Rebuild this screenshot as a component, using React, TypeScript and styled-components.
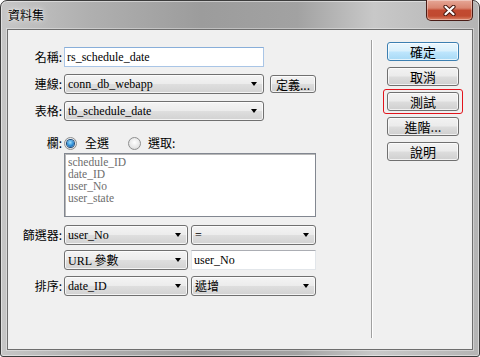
import React from "react";
import styled, { createGlobalStyle } from "styled-components";

const CJK = `"Noto Sans CJK TC", "Liberation Sans", sans-serif`;
const SERIF = `"Liberation Serif", "Noto Sans CJK TC", serif`;

const GlobalStyle = createGlobalStyle`
  html, body {
    margin: 0;
    padding: 0;
    background: #ffffff;
  }
  body {
    width: 480px;
    height: 357px;
    overflow: hidden;
    font-family: ${CJK};
  }
`;

function App() {
  return (
    <>
      <GlobalStyle />
      <Window>
        <TitleBar>
          <Title>資料集</Title>
          <CloseButton>
            <svg width="13" height="11" viewBox="0 0 13 11">
              <path
                d="M2.5 1.8 L10.5 9.2 M10.5 1.8 L2.5 9.2"
                stroke="#4b1b12"
                strokeWidth="4.2"
                strokeLinecap="round"
              />
              <path
                d="M2.5 1.8 L10.5 9.2 M10.5 1.8 L2.5 9.2"
                stroke="#ffffff"
                strokeWidth="2.2"
                strokeLinecap="round"
              />
            </svg>
          </CloseButton>
        </TitleBar>

        <Client>
          <Form>
            <Row $h={20}>
              <Label>名稱:</Label>
              <TextBox $w={200} $focused readOnly value="rs_schedule_date" />
            </Row>

            <Row $h={20} $mt={7}>
              <Label>連線:</Label>
              <Select $w={200}>
                <span>conn_db_webapp</span>
                <Arrow />
              </Select>
              <SmallButton>定義...</SmallButton>
            </Row>

            <Row $h={20} $mt={7}>
              <Label>表格:</Label>
              <Select $w={200}>
                <span>tb_schedule_date</span>
                <Arrow />
              </Select>
            </Row>

            <Row $h={14} $mt={15}>
              <Label>欄:</Label>
              <Radio $checked />
              <RadioText>全選</RadioText>
              <Radio $gap={19} />
              <RadioText $gap={7}>選取:</RadioText>
            </Row>

            <Row $h={64} $mt={3}>
              <Label />
              <ListBox>
                <ListItem>schedule_ID</ListItem>
                <ListItem>date_ID</ListItem>
                <ListItem>user_No</ListItem>
                <ListItem>user_state</ListItem>
              </ListBox>
            </Row>

            <Row $h={20} $mt={8}>
              <Label>篩選器:</Label>
              <Select $w={124}>
                <span>user_No</span>
                <Arrow />
              </Select>
              <Select $w={125} $ml={3}>
                <span>=</span>
                <Arrow />
              </Select>
            </Row>

            <Row $h={20} $mt={5}>
              <Label />
              <Select $w={124}>
                <span>URL 參數</span>
                <Arrow />
              </Select>
              <TextBox $w={125} $ml={3} readOnly value="user_No" />
            </Row>

            <Row $h={20} $mt={6}>
              <Label>排序:</Label>
              <Select $w={124}>
                <span>date_ID</span>
                <Arrow />
              </Select>
              <Select $w={125} $ml={3}>
                <span>遞增</span>
                <Arrow />
              </Select>
            </Row>
          </Form>

          <Separator />

          <ButtonColumn>
            <DialogButton $primary>確定</DialogButton>
            <DialogButton>取消</DialogButton>
            <Marked>
              <DialogButton>測試</DialogButton>
            </Marked>
            <DialogButton>進階...</DialogButton>
            <DialogButton>說明</DialogButton>
          </ButtonColumn>
        </Client>
      </Window>
    </>
  );
}

export default App;

const Window = styled.div`
  width: 480px;
  height: 357px;
  box-sizing: border-box;
  display: flex;
  flex-direction: column;
  padding: 0 6px 6px 6px;
  border: 1px solid #3c3c3c;
  border-radius: 7px 7px 3px 3px;
  background: linear-gradient(
    90deg,
    #c6c6c6 0%,
    #b0b0b0 18%,
    #9c9c9c 42%,
    #a2a2a2 62%,
    #c8c8c8 78%,
    #b4b4b4 100%
  );
  box-shadow: inset 0 0 0 1px rgba(255, 255, 255, 0.45);
`;

const TitleBar = styled.div`
  height: 28px;
  flex-shrink: 0;
  display: flex;
  align-items: flex-start;
`;

const Title = styled.div`
  margin: 7px 0 0 1px;
  font-family: ${CJK};
  font-size: 12px;
  line-height: 14px;
  color: #000;
  text-shadow: 0 0 6px rgba(255, 255, 255, 0.9), 0 0 2px rgba(255, 255, 255, 0.8);
`;

const CloseButton = styled.div`
  margin-left: auto;
  margin-top: -1px;
  width: 47px;
  height: 21px;
  box-sizing: border-box;
  display: flex;
  align-items: center;
  justify-content: center;
  border: 1px solid #4a1c16;
  border-top: none;
  border-radius: 0 0 5px 5px;
  background: linear-gradient(
    180deg,
    #e6a797 0%,
    #d98570 40%,
    #c24a31 52%,
    #c04a30 80%,
    #dc8468 100%
  );
  box-shadow: inset 0 0 0 1px rgba(255, 255, 255, 0.35);
`;

const Client = styled.div`
  flex: 1;
  display: flex;
  background: #f0f0f0;
  border: 1px solid #6e6e6e;
  box-shadow: 0 0 0 1px rgba(255, 255, 255, 0.35);
`;

const Form = styled.div`
  width: 363px;
  flex-shrink: 0;
  display: flex;
  flex-direction: column;
  padding-top: 17px;
  box-sizing: border-box;
`;

const Row = styled.div<{ $h: number; $mt?: number }>`
  display: flex;
  align-items: center;
  height: ${(p) => p.$h}px;
  margin-top: ${(p) => p.$mt ?? 0}px;
`;

const Label = styled.div`
  width: 54px;
  padding-right: 2px;
  flex-shrink: 0;
  text-align: right;
  font-family: ${CJK};
  font-size: 12px;
  line-height: 14px;
  color: #000;
  white-space: nowrap;
`;

const TextBox = styled.input<{ $w: number; $ml?: number; $focused?: boolean }>`
  width: ${(p) => p.$w}px;
  height: 20px;
  margin: 0 0 0 ${(p) => p.$ml ?? 0}px;
  box-sizing: border-box;
  padding: 0 2px;
  background: #fff;
  border: 1px solid ${(p) => (p.$focused ? "#a9c5e6" : "#e2e6ea")};
  border-top-color: ${(p) => (p.$focused ? "#88aed9" : "#abadb3")};
  outline: none;
  font-family: ${SERIF};
  font-size: 12px;
  color: #000;
`;

const Select = styled.div<{ $w: number; $ml?: number }>`
  width: ${(p) => p.$w}px;
  height: 20px;
  margin-left: ${(p) => p.$ml ?? 0}px;
  box-sizing: border-box;
  display: flex;
  align-items: center;
  justify-content: space-between;
  padding: 0 6px 0 3px;
  border: 1px solid #707070;
  border-radius: 3px;
  background: linear-gradient(180deg, #f4f4f4 0%, #ececec 48%, #dedede 52%, #d2d2d2 100%);
  box-shadow: inset 0 0 0 1px rgba(255, 255, 255, 0.75);
  font-family: ${SERIF};
  font-size: 12px;
  color: #000;
  white-space: nowrap;
`;

const Arrow = styled.span`
  width: 0;
  height: 0;
  border-left: 3.5px solid transparent;
  border-right: 3.5px solid transparent;
  border-top: 4px solid #000;
`;

const SmallButton = styled.div`
  width: 46px;
  height: 18px;
  margin-left: 6px;
  box-sizing: border-box;
  display: flex;
  align-items: center;
  justify-content: center;
  border: 1px solid #707070;
  border-radius: 3px;
  background: linear-gradient(180deg, #f2f2f2 0%, #ebebeb 48%, #dddddd 52%, #cfcfcf 100%);
  box-shadow: inset 0 0 0 1px rgba(255, 255, 255, 0.75);
  font-family: ${CJK};
  font-size: 12px;
  color: #000;
`;

const Radio = styled.span<{ $checked?: boolean; $gap?: number }>`
  width: 13px;
  height: 13px;
  margin-left: ${(p) => p.$gap ?? 0}px;
  flex-shrink: 0;
  box-sizing: border-box;
  border-radius: 50%;
  border: 1px solid #8e8f8f;
  background: radial-gradient(circle at 50% 40%, #ffffff 0%, #e6e6e6 60%, #cfcfcf 100%);
  display: flex;
  align-items: center;
  justify-content: center;

  &::after {
    content: "";
    display: ${(p) => (p.$checked ? "block" : "none")};
    width: 7px;
    height: 7px;
    border-radius: 50%;
    background: radial-gradient(circle at 45% 35%, #9fe0ff 0%, #2a8ad4 55%, #1b4f8d 100%);
    box-shadow: 0 0 0 1px #1c4a7a;
  }
`;

const RadioText = styled.span<{ $gap?: number }>`
  margin-left: ${(p) => p.$gap ?? 8}px;
  font-family: ${CJK};
  font-size: 12px;
  line-height: 14px;
  color: #000;
`;

const ListBox = styled.div`
  width: 252px;
  height: 64px;
  box-sizing: border-box;
  padding: 2px 3px;
  background: #fff;
  border: 1px solid #828790;
  box-shadow: inset 1px 1px 0 #b8b8b8;
  display: flex;
  flex-direction: column;
`;

const ListItem = styled.div`
  height: 12px;
  font-family: ${SERIF};
  font-size: 11.5px;
  line-height: 12px;
  color: #6d6d6d;
  white-space: nowrap;
`;

const Separator = styled.div`
  width: 1px;
  flex-shrink: 0;
  margin: 10px 0 11px 0;
  background: #a0a0a0;
  border-right: 1px solid #ffffff;
`;

const ButtonColumn = styled.div`
  display: flex;
  flex-direction: column;
  gap: 6px;
  padding: 12px 0 0 14px;
`;

const DialogButton = styled.div<{ $primary?: boolean }>`
  width: 72px;
  height: 19px;
  box-sizing: border-box;
  display: flex;
  align-items: center;
  justify-content: center;
  border: 1px solid ${(p) => (p.$primary ? "#3c7fb1" : "#707070")};
  border-radius: 3px;
  background: ${(p) =>
    p.$primary
      ? "linear-gradient(180deg, #eaf6fd 0%, #d9f0fc 48%, #bee6fd 52%, #a7d9f5 100%)"
      : "linear-gradient(180deg, #f2f2f2 0%, #ebebeb 48%, #dddddd 52%, #cfcfcf 100%)"};
  box-shadow: inset 0 0 0 1px rgba(255, 255, 255, 0.7);
  font-family: ${CJK};
  font-size: 13px;
  color: #000;
`;

const Marked = styled.div`
  position: relative;

  &::after {
    content: "";
    position: absolute;
    inset: -3px -4px;
    border: 1px solid #e2141c;
    border-radius: 3px;
    pointer-events: none;
  }
`;
